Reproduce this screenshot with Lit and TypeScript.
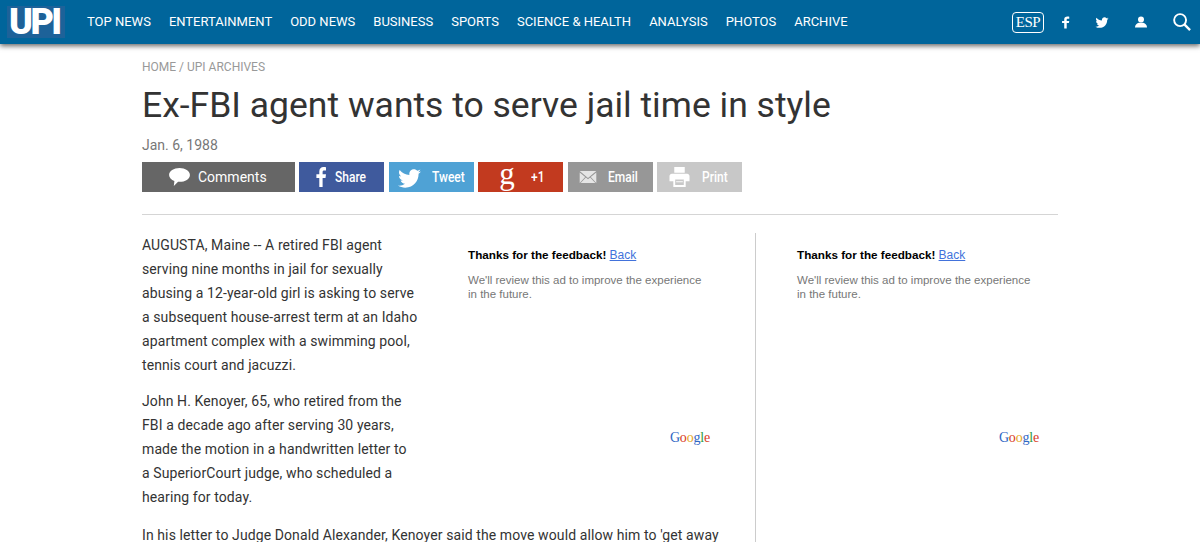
import { LitElement, html, css, svg } from "lit";
import { customElement } from "lit/decorators.js";

const NAV = ["Top News", "Entertainment", "Odd News", "Business", "Sports", "Science & Health", "Analysis", "Photos", "Archive"];

const FB = svg`<path d="M9.600 20V11.400h2.900l.5-3.400H9.600V5.900c0-1 .3-1.600 1.700-1.600H13V1.200C12.700 1.100 11.700 1 10.500 1 8 1 6.300 2.500 6.300 5.300V8H3.400v3.400h2.900V20z"/>`;
const TWITTER = svg`<path d="M24 4.600c-.9.4-1.800.7-2.800.8 1-.6 1.800-1.600 2.200-2.700-1 .6-2 1-3.100 1.200C19.300 2.900 18 2.300 16.700 2.300c-2.700 0-4.900 2.200-4.900 4.900 0 .4 0 .8.100 1.100C7.800 8.100 4.100 6.100 1.700 3.100c-.4.700-.7 1.600-.7 2.500 0 1.700.9 3.200 2.200 4.100-.8 0-1.600-.2-2.200-.6v.1c0 2.400 1.700 4.400 3.900 4.800-.4.100-.8.200-1.300.2-.3 0-.6 0-.9-.1.600 2 2.400 3.400 4.600 3.400-1.700 1.300-3.800 2.100-6.100 2.100-.4 0-.8 0-1.200-.1 2.200 1.400 4.800 2.200 7.500 2.200 9.100 0 14-7.500 14-14v-.6c1-.7 1.800-1.600 2.500-2.500z"/>`;

@customElement("app-root")
export class AppRoot extends LitElement {
  static styles = css`
    :host {
      display: block;
      height: 542px;
      overflow: hidden;
      background: #fff;
      font-family: Roboto, sans-serif;
      color: #333;
    }
    header {
      height: 44px;
      background: #00659b;
      box-shadow: 0 2px 5px rgba(0, 0, 0, 0.6);
      display: flex;
      align-items: center;
      color: #fff;
      position: relative;
    }
    .logo {
      margin-left: 7px;
      width: 56px;
      height: 32px;
      padding-left: 2px;
      background: #1d6299;
      font-size: 36px;
      line-height: 32px;
      font-weight: 900;
      letter-spacing: -2.500px;
    }
    nav {
      display: flex;
      gap: 18px;
      margin-left: 22px;
      padding-bottom: 2px;
      font-size: 13px;
      text-transform: uppercase;
    }
    .tools {
      margin-left: auto;
      display: flex;
      align-items: center;
      margin-right: 9px;
    }
    .esp {
      width: 30px;
      height: 19px;
      border: 1.500px solid #fff;
      border-radius: 4px;
      font: 15px/19px "Liberation Serif", serif;
      letter-spacing: -0.500px;
      text-align: center;
    }
    .tools svg { fill: #fff; display: block; }
    .tools .fb { margin-left: 17px; }
    .tools .tw { margin-left: 25px; }
    .tools .user { margin-left: 26px; }
    .tools .search { margin-left: 26px; fill: none; stroke: #fff; stroke-width: 2; }
    main {
      width: 916px;
      margin: 0 auto;
    }
    .crumb {
      padding-top: 16px;
      font-size: 12px;
      line-height: 14px;
      color: #999;
      text-transform: uppercase;
    }
    h1 {
      margin: 9px 0 0;
      font-size: 35.500px;
      line-height: 44px;
      font-weight: 400;
      color: #333;
    }
    .date {
      margin-top: 9px;
      font-size: 14px;
      line-height: 18px;
      color: #777;
    }
    .share {
      display: flex;
      gap: 4.400px;
      margin-top: 8px;
      padding-bottom: 22px;
      border-bottom: 1px solid #d5d5d5;
    }
    .btn {
      width: 85px;
      height: 30px;
      box-sizing: border-box;
      display: flex;
      align-items: center;
      color: #fff;
      font-size: 15px;
      font-weight: 500;
    }
    .btn svg { fill: #fff; display: block; flex: none; }
    .btn .label { display: inline-block; transform: scaleX(0.8); transform-origin: left center; }
    .comments { width: 153px; background: #666; padding-left: 27px; gap: 8px; }
    .comments .label { transform: none; font-weight: 400; font-size: 14px; }
    .facebook { background: #3f5a9d; padding-left: 17px; gap: 9px; }
    .twitter { background: #4fa2d5; padding-left: 9px; gap: 11px; }
    .gplus { background: #c23a1f; padding-left: 21px; gap: 16px; }
    .gplus .g { font: 31px/30px "Liberation Serif", serif; margin-top: -6px; }
    .email { background: #979797; padding-left: 11px; gap: 11px; }
    .print { background: #c8c8c8; padding-left: 12px; gap: 12px; }
    .body {
      display: flex;
      margin-top: 18px;
    }
    article {
      width: 586px;
      margin-right: 27px;
      font-size: 14px;
      letter-spacing: 0.100px;
      line-height: 24px;
      color: #333;
    }
    article p { margin: 0 0 12px; }
    article p.wide { margin-bottom: 14px; }
    .side {
      flex: 1;
      border-left: 1px solid #ccc;
      min-height: 320px;
      padding-left: 1px;
    }
    article .ad { float: right; margin-left: 9px; margin-bottom: 14px; }
    .ad {
      width: 300px;
      height: 250px;
      position: relative;
      letter-spacing: 0;
      font-family: "Liberation Sans", Arial, sans-serif;
    }
    .ad .inner { padding: 15px 18px 0 40px; }
    .ad .thanks {
      font-size: 11.700px;
      line-height: 14px;
      font-weight: 700;
      color: #000;
    }
    .ad a { font-weight: 400; font-size: 12px; color: #4272db; text-decoration: underline; }
    .ad .note {
      margin-top: 11px;
      font-size: 11.500px;
      line-height: 14px;
      color: #777;
    }
    .google {
      position: absolute;
      right: 18px;
      top: 197px;
      font: 14px/16px "Liberation Serif", serif;
      letter-spacing: -0.200px;
    }
    .google .b { color: #2f66c4; }
    .google .r { color: #d93a26; }
    .google .y { color: #e6a81c; }
    .google .g { color: #2f9a44; }
  `;

  renderAd() {
    return html`<div class="ad">
      <div class="inner">
        <div class="thanks">Thanks for the feedback! <a>Back</a></div>
        <div class="note">We'll review this ad to improve the experience in the future.</div>
      </div>
      <div class="google"><span class="b">G</span><span class="r">o</span><span class="y">o</span><span class="b">g</span><span class="g">l</span><span class="r">e</span></div>
    </div>`;
  }

  render() {
    return html`
      <header>
        <div class="logo">UPI</div>
        <nav>${NAV.map((n) => html`<span>${n}</span>`)}</nav>
        <div class="tools">
          <div class="esp">ESP</div>
          <svg class="fb" width="9" height="13" viewBox="2 0 12 21" preserveAspectRatio="none">${FB}</svg>
          <svg class="tw" width="14" height="12" viewBox="0 0 24 22">${TWITTER}</svg>
          <svg class="user" width="12" height="12" viewBox="0 0 14 13"><circle cx="7" cy="3.500" r="3.500"/><path d="M0 13c0-3.500 2.500-5 4.500-5.500h5C11.500 8 14 9.500 14 13z"/></svg>
          <svg class="search" width="18" height="18" viewBox="0 0 19 19"><circle cx="7.500" cy="7.500" r="6.300"/><path d="M12 12l6 6" stroke-width="2.500"/></svg>
        </div>
      </header>
      <main>
        <div class="crumb">Home / UPI Archives</div>
        <h1>Ex-FBI agent wants to serve jail time in style</h1>
        <div class="date">Jan. 6, 1988</div>
        <div class="share">
          <div class="btn comments">
            <svg width="21" height="18" viewBox="0 0 22 19"><path d="M11 0c6 0 11 3.100 11 7.300s-5 7.300-11 7.300h-1.500L5 19l.6-5.400C2.300 12.400 0 10 0 7.300 0 3.100 5 0 11 0z"/></svg>
            <span class="label">Comments</span>
          </div>
          <div class="btn facebook">
            <svg width="10" height="20" viewBox="3 1 10 19" preserveAspectRatio="none">${FB}</svg>
            <span class="label">Share</span>
          </div>
          <div class="btn twitter">
            <svg width="23" height="21" viewBox="0 0 24 22">${TWITTER}</svg>
            <span class="label">Tweet</span>
          </div>
          <div class="btn gplus"><span class="g">g</span><span class="label">+1</span></div>
          <div class="btn email">
            <svg width="18" height="12" viewBox="0 0 18 13"><path d="M0 0h18L9 7.500zM0 1.500V13l6-6.500zM18 1.500V13l-6-6.500zM1 13h16l-5.700-6L9 9 6.700 7z" fill-opacity=".75"/></svg>
            <span class="label">Email</span>
          </div>
          <div class="btn print">
            <svg width="21" height="20" viewBox="0 0 21 21"><path fill-rule="evenodd" d="M5 0h11v6H5zM2.500 7h16c1.400 0 2.500 1.100 2.500 2.500V15h-4v6H4v-6H0V9.500C0 8.100 1.100 7 2.500 7zM6 13v6h9v-6z"/><path d="M7 15h7v1H7z"/></svg>
            <span class="label">Print</span>
          </div>
        </div>
        <div class="body">
          <article>
            ${this.renderAd()}
            <p>AUGUSTA, Maine -- A retired FBI agent serving nine months in jail for sexually abusing a 12-year-old girl is asking to serve a subsequent house-arrest term at an Idaho apartment complex with a swimming pool, tennis court and jacuzzi.</p>
            <p class="wide">John H. Kenoyer, 65, who retired from the FBI a decade ago after serving 30 years, made the motion in a handwritten letter to<br />a SuperiorCourt judge, who scheduled a hearing for today.</p>
            <p>In his letter to Judge Donald Alexander, Kenoyer said the move would allow him to 'get away</p>
          </article>
          <div class="side">${this.renderAd()}</div>
        </div>
      </main>
    `;
  }
}
